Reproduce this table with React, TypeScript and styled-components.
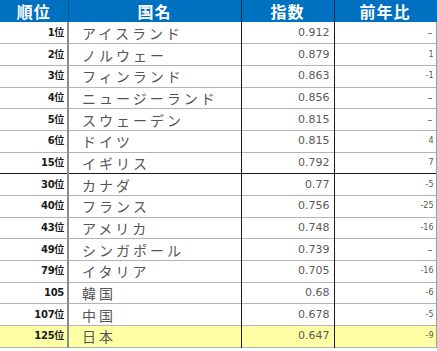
import { createGlobalStyle } from 'styled-components'
import styled from 'styled-components'

interface RankRow {
  rank: string
  country: string
  index: string
  change: string
  highlight?: boolean
  strongBottom?: boolean
}

const ROWS: RankRow[] = [
  { rank: '1位', country: 'アイスランド', index: '0.912', change: '–' },
  { rank: '2位', country: 'ノルウェー', index: '0.879', change: '1' },
  { rank: '3位', country: 'フィンランド', index: '0.863', change: '-1' },
  { rank: '4位', country: 'ニュージーランド', index: '0.856', change: '–' },
  { rank: '5位', country: 'スウェーデン', index: '0.815', change: '–' },
  { rank: '6位', country: 'ドイツ', index: '0.815', change: '4' },
  { rank: '15位', country: 'イギリス', index: '0.792', change: '7', strongBottom: true },
  { rank: '30位', country: 'カナダ', index: '0.77', change: '-5' },
  { rank: '40位', country: 'フランス', index: '0.756', change: '-25' },
  { rank: '43位', country: 'アメリカ', index: '0.748', change: '-16' },
  { rank: '49位', country: 'シンガポール', index: '0.739', change: '–' },
  { rank: '79位', country: 'イタリア', index: '0.705', change: '-16' },
  { rank: '105', country: '韓国', index: '0.68', change: '-6' },
  { rank: '107位', country: '中国', index: '0.678', change: '-5' },
  { rank: '125位', country: '日本', index: '0.647', change: '-9', highlight: true },
]

const GlobalStyle = createGlobalStyle`
  html, body {
    margin: 0;
    padding: 0;
    background: #ffffff;
  }
`

export default function App(): JSX.Element {
  return (
    <>
      <GlobalStyle />
      <Table>
        <colgroup>
          <col style={{ width: 68 }} />
          <col style={{ width: 173 }} />
          <col style={{ width: 93 }} />
          <col style={{ width: 102 }} />
        </colgroup>
        <thead>
          <tr>
            <HeaderCell divider="rank">順位</HeaderCell>
            <HeaderCell divider="dark">国名</HeaderCell>
            <HeaderCell divider="dark">指数</HeaderCell>
            <HeaderCell>前年比</HeaderCell>
          </tr>
        </thead>
        <tbody>
          {ROWS.map(row => (
            <Row
              key={row.rank}
              $highlight={row.highlight}
              $strongBottom={row.strongBottom}
            >
              <RankCell>{row.rank}</RankCell>
              <CountryCell>{row.country}</CountryCell>
              <IndexCell>{row.index}</IndexCell>
              <ChangeCell $dash={row.change === '–'}>{row.change}</ChangeCell>
            </Row>
          ))}
        </tbody>
      </Table>
    </>
  )
}

const Table = styled('table')`
  width: 436px;
  table-layout: fixed;
  border-collapse: collapse;
  border-spacing: 0;
`

const HeaderCell = styled('th')<{ divider?: 'rank' | 'dark' }>`
  height: 22px;
  padding: 0;
  background-color: #0070c0;
  color: #ffffff;
  font-family: 'Noto Sans CJK JP', sans-serif;
  font-size: 16px;
  font-weight: 700;
  line-height: 22px;
  text-align: center;
  letter-spacing: 1px;
  border-right: 1px solid
    ${({ divider }) =>
      divider === 'rank' ? '#1d4f7a' : divider === 'dark' ? '#1b2c3d' : '#0070c0'};
`

const Row = styled('tr')<{ $highlight?: boolean; $strongBottom?: boolean }>`
  height: 21.7px;
  background-color: ${({ $highlight }) => ($highlight ? '#ffffa6' : '#ffffff')};
  border-bottom: 1px solid ${({ $strongBottom }) => ($strongBottom ? '#1a1a1a' : '#b4b4b4')};
`

const Cell = styled('td')`
  padding: 0;
  vertical-align: middle;
  white-space: nowrap;
  overflow: hidden;
  line-height: 14px;
`

const RankCell = styled(Cell)`
  padding-right: 3px;
  text-align: right;
  font-family: 'DejaVu Sans', 'Noto Sans CJK JP', sans-serif;
  font-size: 10px;
  font-weight: 700;
  color: #1a1a1a;
  border-right: 2px solid #8c8c8c;
  letter-spacing: -0.3px;
`

const CountryCell = styled(Cell)`
  padding-left: 13px;
  font-family: 'Noto Sans CJK JP', sans-serif;
  font-size: 14px;
  color: #555555;
  letter-spacing: 3px;
  border-right: 1px solid #1a1a1a;
`

const IndexCell = styled(Cell)`
  padding-right: 4px;
  text-align: right;
  font-family: 'DejaVu Sans', sans-serif;
  font-size: 11px;
  color: #5a5a5a;
  border-right: 1px solid #1a1a1a;
`

const ChangeCell = styled(Cell)<{ $dash?: boolean }>`
  padding-right: ${({ $dash }) => ($dash ? '3px' : '2px')};
  text-align: right;
  font-family: 'DejaVu Sans', sans-serif;
  font-size: ${({ $dash }) => ($dash ? '10px' : '8px')};
  color: #555555;
  border-right: 1px solid #9a9a9a;
`
